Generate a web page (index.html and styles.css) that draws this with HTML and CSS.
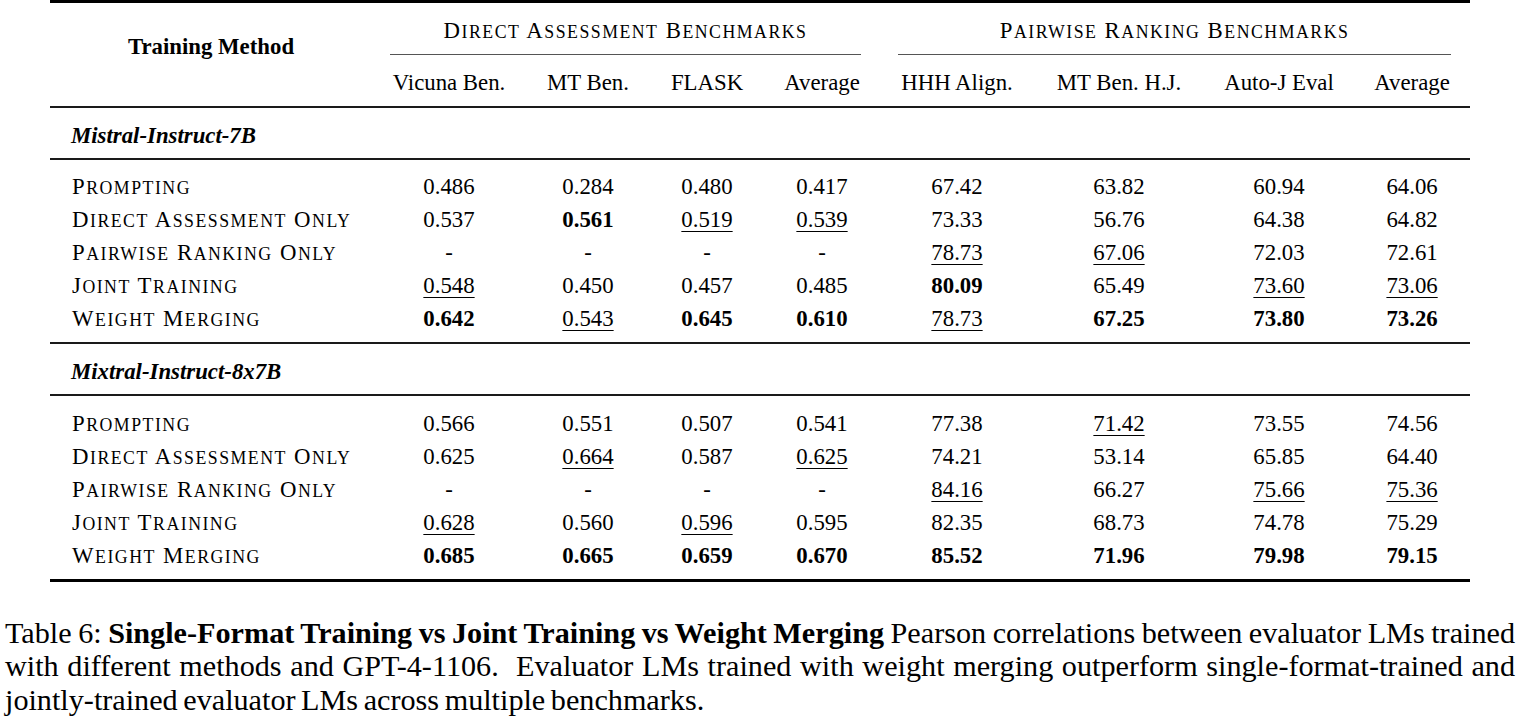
FILE: index.html
```html
<!DOCTYPE html>
<html lang="en">
<head>
<meta charset="utf-8">
<title>Table 6</title>
<link rel="stylesheet" href="styles.css">
</head>
<body>
<div class="page">
  <table class="results">
    <colgroup>
      <col class="c-label">
      <col class="c-vic">
      <col class="c-mt">
      <col class="c-flask">
      <col class="c-avg">
      <col class="c-hhh">
      <col class="c-mthj">
      <col class="c-autoj">
      <col class="c-avg2">
    </colgroup>
    <thead>
      <tr class="head1">
        <th class="method" rowspan="2">Training Method</th>
        <th class="group" colspan="4"><div class="cmid sc-label">D<span class="sc">irect</span> A<span class="sc">ssessment</span> B<span class="sc">enchmarks</span></div></th>
        <th class="group" colspan="4"><div class="cmid sc-label">P<span class="sc">airwise</span> R<span class="sc">anking</span> B<span class="sc">enchmarks</span></div></th>
      </tr>
      <tr class="head2">
        <th>Vicuna Ben.</th>
        <th>MT Ben.</th>
        <th>FLASK</th>
        <th>Average</th>
        <th>HHH Align.</th>
        <th>MT Ben. H.J.</th>
        <th>Auto-J Eval</th>
        <th>Average</th>
      </tr>
    </thead>
    <tbody>
      <tr class="model"><td colspan="9">Mistral-Instruct-7B</td></tr>
      <tr class="first">
        <td class="label sc-label">P<span class="sc">rompting</span></td>
        <td>0.486</td><td>0.284</td><td>0.480</td><td>0.417</td>
        <td>67.42</td><td>63.82</td><td>60.94</td><td>64.06</td>
      </tr>
      <tr>
        <td class="label sc-label">D<span class="sc">irect</span> A<span class="sc">ssessment</span> O<span class="sc">nly</span></td>
        <td>0.537</td><td><b>0.561</b></td><td><u>0.519</u></td><td><u>0.539</u></td>
        <td>73.33</td><td>56.76</td><td>64.38</td><td>64.82</td>
      </tr>
      <tr>
        <td class="label sc-label">P<span class="sc">airwise</span> R<span class="sc">anking</span> O<span class="sc">nly</span></td>
        <td>-</td><td>-</td><td>-</td><td>-</td>
        <td><u>78.73</u></td><td><u>67.06</u></td><td>72.03</td><td>72.61</td>
      </tr>
      <tr>
        <td class="label sc-label">J<span class="sc">oint</span> T<span class="sc">raining</span></td>
        <td><u>0.548</u></td><td>0.450</td><td>0.457</td><td>0.485</td>
        <td><b>80.09</b></td><td>65.49</td><td><u>73.60</u></td><td><u>73.06</u></td>
      </tr>
      <tr class="last">
        <td class="label sc-label">W<span class="sc">eight</span> M<span class="sc">erging</span></td>
        <td><b>0.642</b></td><td><u>0.543</u></td><td><b>0.645</b></td><td><b>0.610</b></td>
        <td><u>78.73</u></td><td><b>67.25</b></td><td><b>73.80</b></td><td><b>73.26</b></td>
      </tr>
      <tr class="model"><td colspan="9">Mixtral-Instruct-8x7B</td></tr>
      <tr class="first second">
        <td class="label sc-label">P<span class="sc">rompting</span></td>
        <td>0.566</td><td>0.551</td><td>0.507</td><td>0.541</td>
        <td>77.38</td><td><u>71.42</u></td><td>73.55</td><td>74.56</td>
      </tr>
      <tr>
        <td class="label sc-label">D<span class="sc">irect</span> A<span class="sc">ssessment</span> O<span class="sc">nly</span></td>
        <td>0.625</td><td><u>0.664</u></td><td>0.587</td><td><u>0.625</u></td>
        <td>74.21</td><td>53.14</td><td>65.85</td><td>64.40</td>
      </tr>
      <tr>
        <td class="label sc-label">P<span class="sc">airwise</span> R<span class="sc">anking</span> O<span class="sc">nly</span></td>
        <td>-</td><td>-</td><td>-</td><td>-</td>
        <td><u>84.16</u></td><td>66.27</td><td><u>75.66</u></td><td><u>75.36</u></td>
      </tr>
      <tr>
        <td class="label sc-label">J<span class="sc">oint</span> T<span class="sc">raining</span></td>
        <td><u>0.628</u></td><td>0.560</td><td><u>0.596</u></td><td>0.595</td>
        <td>82.35</td><td>68.73</td><td>74.78</td><td>75.29</td>
      </tr>
      <tr class="last final">
        <td class="label sc-label">W<span class="sc">eight</span> M<span class="sc">erging</span></td>
        <td><b>0.685</b></td><td><b>0.665</b></td><td><b>0.659</b></td><td><b>0.670</b></td>
        <td><b>85.52</b></td><td><b>71.96</b></td><td><b>79.98</b></td><td><b>79.15</b></td>
      </tr>
    </tbody>
  </table>
  <p class="caption">Table 6: <b>Single-Format Training vs Joint Training vs Weight Merging</b> Pearson correlations between evaluator LMs trained with different methods and GPT-4-1106.&nbsp; Evaluator LMs trained with weight merging outperform single-format-trained and jointly-trained evaluator LMs across multiple benchmarks.</p>
</div>
</body>
</html>
```

FILE: styles.css
```css
html, body {
  margin: 0;
  padding: 0;
  background: #ffffff;
  color: #000000;
}

.page {
  width: 1519px;
}

.results {
  margin-left: 50px;
  width: 1420px;
  table-layout: fixed;
  border-collapse: separate;
  border-spacing: 0;
  border-top: 3px solid #000;
  border-bottom: 3px solid #000;
  font-family: "Liberation Serif", "Times New Roman", serif;
  font-size: 22.8px;
  line-height: 26px;
  color: #000;
}

.c-label { width: 322px; }
.c-vic { width: 154px; }
.c-mt { width: 124px; }
.c-flask { width: 114px; }
.c-avg { width: 116px; }
.c-hhh { width: 154px; }
.c-mthj { width: 170px; }
.c-autoj { width: 150px; }
.c-avg2 { width: 116px; }

.results th,
.results td {
  height: 26px;
  padding: 5.5px 0 1.5px 0;
  text-align: center;
  white-space: nowrap;
  font-weight: normal;
}

.results th.method {
  height: auto;
  font-weight: bold;
  vertical-align: middle;
  padding: 0 0 15px 0;
  border-bottom: 2px solid #1a1a1a;
}

.head1 th.group {
  height: auto;
  padding: 15px 0 0 0;
  vertical-align: top;
}

.cmid {
  height: 26px;
  margin: 0 19px 0 18px;
  padding-bottom: 10px;
  border-bottom: 1px solid #555;
}

.head2 th {
  padding: 15px 0 10px 0;
  border-bottom: 2px solid #1a1a1a;
}

.model td {
  text-align: left;
  padding: 15px 0 9px 21px;
  font-weight: bold;
  font-style: italic;
  border-bottom: 2px solid #1a1a1a;
}

.results tr.first td {
  padding-top: 14px;
}

.results tr.second td {
  padding-top: 15px;
}

.results tr.last td {
  padding-bottom: 10px;
  border-bottom: 2px solid #1a1a1a;
}

.results tr.final td {
  padding-bottom: 10px;
  border-bottom: none;
}

.results td.label {
  text-align: left;
  padding-left: 22px;
}

.sc-label {
  letter-spacing: 1.5px;
}

.sc {
  font-size: 0.78em;
  line-height: 1;
  text-transform: uppercase;
}

.results b {
  font-weight: bold;
}

.results u {
  text-decoration: underline;
  text-decoration-thickness: 1px;
  text-underline-offset: 4px;
}

.caption {
  margin: 34.5px 0 0 5px;
  width: 1510px;
  font-family: "Liberation Serif", "Times New Roman", serif;
  font-size: 30.2px;
  line-height: 33.5px;
  word-spacing: -2px;
  text-align: justify;
  color: #000;
}

.caption b {
  font-weight: bold;
}
```
